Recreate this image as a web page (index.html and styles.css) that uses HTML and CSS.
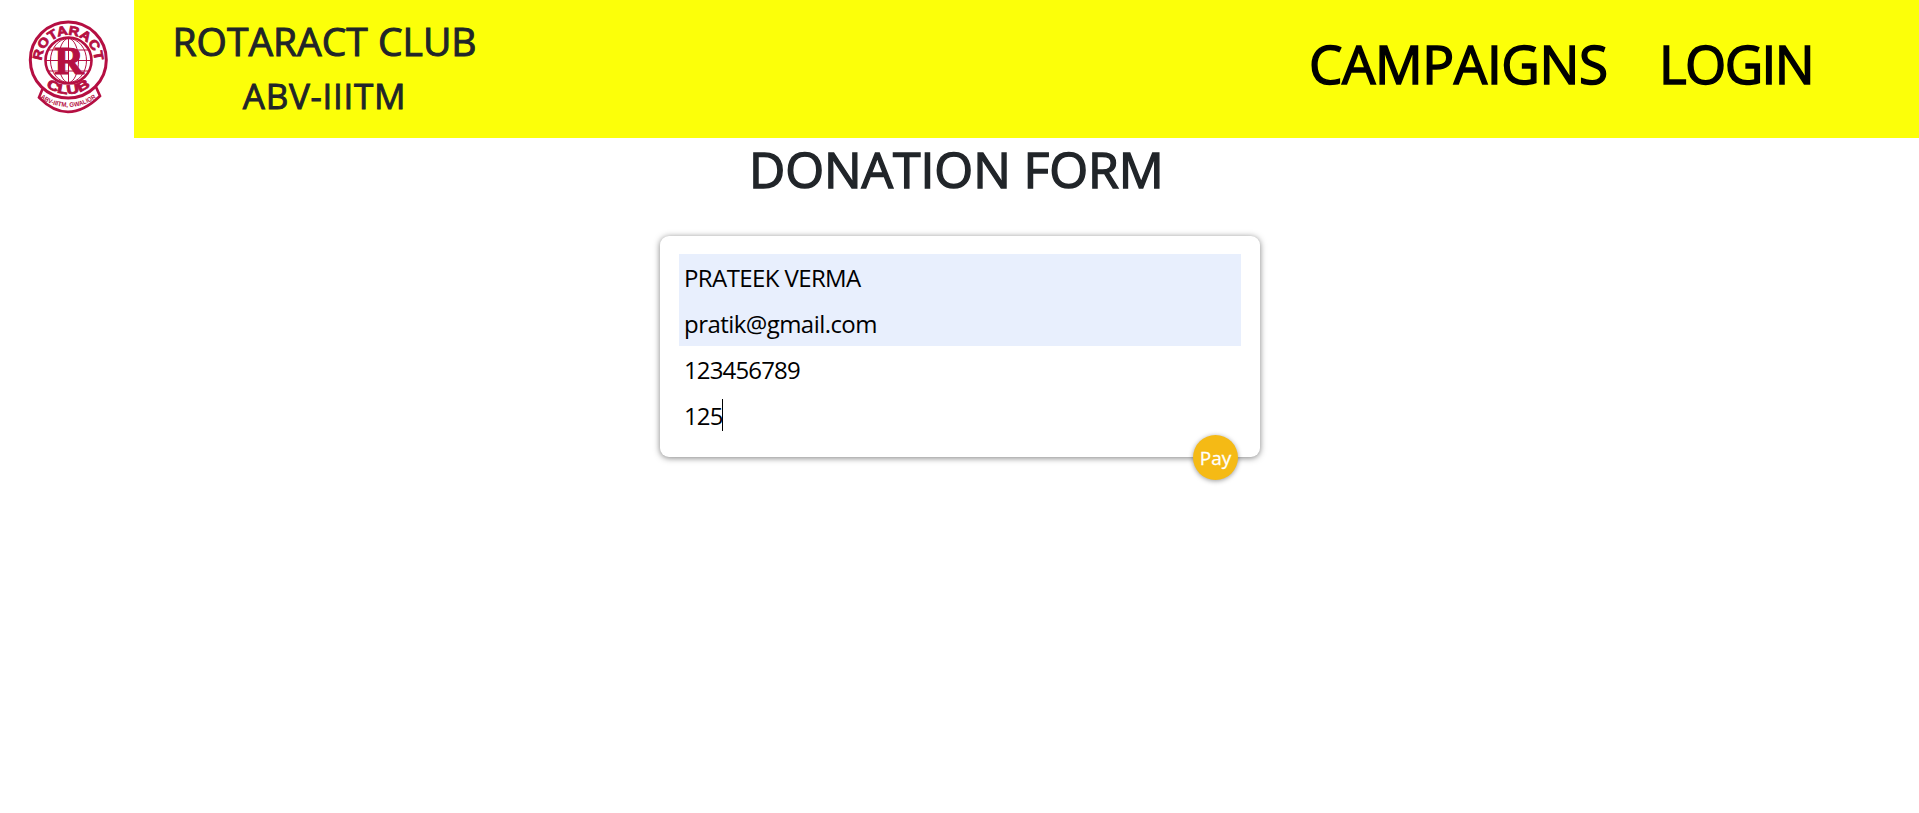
FILE: index.html
```html
<!DOCTYPE html>
<html lang="en">
<head>
<meta charset="utf-8">
<title>Donation Form</title>
<link rel="stylesheet" href="styles.css">
</head>
<body>
<header class="header">
  <div class="logo">
    <svg class="logo-art" viewBox="0 0 134 138" width="134" height="138" role="img" aria-label="Rotaract Club logo">
      <defs>
        <path id="arc-top" d="M41.700 61.500A26.500 26.500 0 0 1 94.700 61.500"/>
        <path id="arc-bottom" d="M33.700 59.500A34.500 34.500 0 0 0 102.700 59.500"/>
        <path id="arc-ribbon" d="M21.200 60A47 47 0 0 0 115.200 60"/>
      </defs>
      <path class="ribbon" d="M42.500 89L39 97.500Q68 127 100 96L96 87"/>
      <circle class="ring" cx="68.300" cy="60" r="38"/>
      <circle class="globe" cx="68.500" cy="60.500" r="23"/>
      <g class="grid">
        <path d="M46 60.500H91M49 50H88M49 71H88M68.500 38V83"/>
        <ellipse cx="68.500" cy="60.500" rx="10" ry="22"/>
        <ellipse cx="68.500" cy="60.500" rx="18" ry="22"/>
      </g>
      <text class="logo-initial" x="69" y="74">R</text>
      <text class="logo-name"><textPath href="#arc-top" startOffset="50%" textLength="81" lengthAdjust="spacingAndGlyphs">ROTARACT</textPath></text>
      <text class="logo-name"><textPath href="#arc-bottom" startOffset="50%" textLength="48" lengthAdjust="spacingAndGlyphs">CLUB</textPath></text>
      <text class="logo-place"><textPath href="#arc-ribbon" startOffset="50%" textLength="60" lengthAdjust="spacingAndGlyphs">ABV-IIITM, GWALIOR</textPath></text>
    </svg>
  </div>
  <div class="brand">
    <div class="club">ROTARACT CLUB</div>
    <div class="college">ABV-IIITM</div>
  </div>
  <nav class="nav">
    <a class="link campaigns">CAMPAIGNS</a>
    <a class="link login">LOGIN</a>
  </nav>
</header>
<main class="main">
  <h1 class="title">DONATION FORM</h1>
  <form class="form">
    <div class="field filled name">PRATEEK VERMA</div>
    <div class="field filled email">pratik@gmail.com</div>
    <div class="field number">123456789</div>
    <div class="field number">125<span class="caret"></span></div>
    <button class="pay" type="button">Pay</button>
  </form>
</main>
</body>
</html>
```
FILE: styles.css
```css
* { box-sizing: border-box; }
body {
  min-height: 100vh;
  margin: 0;
  background: #fff;
  color: #212529;
  font-family: "Open Sans", "Noto Sans", sans-serif;
}
.header {
  display: flex;
  height: 138px;
  background: #fcff09;
}
.logo { width: 134px; background: #fff; }
.logo-art { display: block; }
.ribbon { fill: #fff; stroke: #b50f42; stroke-width: 2.600; }
.ring { fill: #fff; stroke: #b50f42; stroke-width: 3; }
.globe { fill: #fff; stroke: #b50f42; stroke-width: 2.600; }
.grid { fill: none; stroke: #b50f42; stroke-width: 1; }
.logo-initial {
  font: bold 41px "Liberation Serif", serif;
  fill: #b50f42;
  stroke: #b50f42;
  stroke-width: 1;
  text-anchor: middle;
}
.logo-name {
  font: bold 13px "Liberation Sans", sans-serif;
  fill: #b50f42;
  stroke: #b50f42;
  stroke-width: 0.800;
  text-anchor: middle;
}
.logo-place {
  font: bold 6.500px "Liberation Sans", sans-serif;
  fill: #b50f42;
  text-anchor: middle;
}
.brand {
  display: flex;
  flex-direction: column;
  align-items: center;
  width: 299px;
  margin-left: 41px;
  padding-top: 14px;
  white-space: nowrap;
}
.club { font-size: 39px; line-height: 54px; -webkit-text-stroke: 1px; }
.college {
  font-size: 35px;
  line-height: 56px;
  letter-spacing: 0.7px;
  -webkit-text-stroke: 0.9px;
}
.nav {
  display: flex;
  gap: 50px;
  margin-left: auto;
  padding: 29px 101px 0 0;
  color: #000;
  font-size: 53px;
  line-height: 70px;
  -webkit-text-stroke: 1.5px;
}
.link { width: 159px; white-space: nowrap; letter-spacing: -1.6px; }
.campaigns { width: 300px; letter-spacing: -0.4px; }
.main { display: flex; flex-direction: column; align-items: center; }
.title {
  width: 421px;
  margin: 0;
  font-size: 50px;
  font-weight: 400;
  line-height: 62px;
  letter-spacing: -0.1px;
  white-space: nowrap;
  -webkit-text-stroke: 1.4px;
}
.form {
  position: relative;
  width: 600px;
  height: 221px;
  margin: 36px 0 0 1px;
  padding: 18px 19px;
  border-radius: 9px;
  background: #fff;
  box-shadow: 0 1px 6px rgba(0, 0, 0, 0.5);
}
.field {
  display: flex;
  align-items: center;
  height: 46px;
  padding: 0 5px;
  color: #000;
  font-size: 24px;
}
.filled { background: #e8effd; }
.name { letter-spacing: -0.6px; }
.email { letter-spacing: -0.55px; }
.number { letter-spacing: -0.85px; }
.caret { width: 1px; height: 32px; margin-left: -1px; background: #000; }
.pay {
  position: absolute;
  right: 22px;
  bottom: -23px;
  width: 45px;
  height: 45px;
  padding: 0;
  border: 0;
  border-radius: 50%;
  background: #f5ba15;
  box-shadow: 0 1px 5px rgba(0, 0, 0, 0.4);
  color: #fff;
  font: 19px "Open Sans", sans-serif;
  -webkit-text-stroke: 0.3px;
}
```
